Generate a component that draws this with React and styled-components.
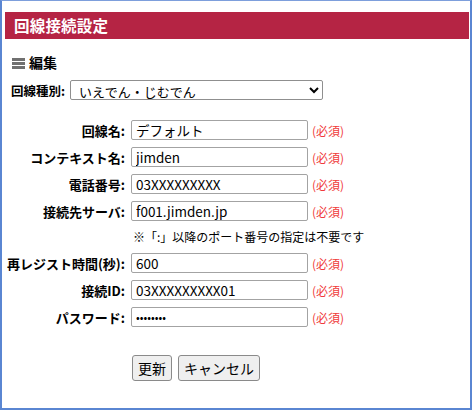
import React from "react";
import styled, { createGlobalStyle } from "styled-components";

const Global = createGlobalStyle`
  html, body { margin: 0; padding: 0; background: #fff; }
  body { font-family: "Noto Sans CJK JP", "Noto Sans", sans-serif; color: #000; }
  * { box-sizing: border-box; }
`;

const Frame = styled.div`
  width: 472px;
  height: 410px;
  border: 2px solid #5a86d2;
  border-top: 1px solid #7d9fdc;
  padding: 11px 1px 0 3px;
  background: #fff;
`;

const Header = styled.div`
  height: 27px;
  background: #b52444;
  color: #fff;
  font-weight: bold;
  font-size: 15.5px;
  line-height: 27px;
  padding-left: 9px;
  letter-spacing: 0.2px;
`;

const Heading = styled.div`
  margin: 15px 0 0 7px;
  display: flex;
  align-items: center;
  gap: 4px;
  font-weight: bold;
  font-size: 14px;
  height: 16px;
  line-height: 16px;
`;

const Bars = styled.span`
  display: inline-flex;
  flex-direction: column;
  gap: 1px;
  width: 13px;
  margin-top: 2px;
  & > i { display: block; height: 3px; background: #707070; }
`;

const TypeRow = styled.div`
  margin: 10px 0 0 6px;
  display: flex;
  align-items: center;
  gap: 5px;
  height: 20px;
`;

const Label = styled.label`
  font-size: ${(p) => p.$size || 13}px;
  font-weight: bold;
  white-space: nowrap;
  justify-self: end;
`;

const Select = styled.select`
  width: 253px;
  height: 20px;
  font-family: inherit;
  font-size: 13px;
  padding: 0 0 0 4px;
  border: 1px solid #8f8f8f;
  border-radius: 2px;
  background: #fff;
  color: #000;
`;

const Form = styled.div`
  margin-top: 20px;
  display: grid;
  grid-template-columns: 120px 177px auto;
  column-gap: 6px;
  row-gap: 7px;
  align-items: center;
`;

const Input = styled.input`
  width: 177px;
  height: 20px;
  font-family: inherit;
  font-size: 13.5px;
  padding: 0 4px;
  border: 1px solid #a3a3a3;
  border-radius: 2px;
  color: #000;
  background: #fff;
  outline: none;
  &[type="password"] { font-size: 11px; letter-spacing: 0; }
`;

const Required = styled.span`
  font-size: 12px;
  color: #f03a3a;
  margin-left: -2px;
`;

const Note = styled.div`
  grid-column: 2 / 4;
  font-size: 12px;
  height: 18px;
  line-height: 18px;
  padding-left: 2px;
  white-space: nowrap;
  color: #000;
`;

const Buttons = styled.div`
  margin: 28px 0 0 127px;
  display: flex;
  gap: 6px;
`;

const Button = styled.button`
  height: 26px;
  padding: 0 ${(p) => p.$pad || 5}px;
  font-family: inherit;
  font-size: 14px;
  background: #efefef;
  border: 1px solid #8a8a8a;
  border-radius: 3px;
  color: #000;
`;

const rows = [
  { label: "回線名:", value: "デフォルト" },
  { label: "コンテキスト名:", value: "jimden" },
  { label: "電話番号:", value: "03XXXXXXXXX" },
  { label: "接続先サーバ:", value: "f001.jimden.jp", note: "※「:」以降のポート番号の指定は不要です" },
  { label: "再レジスト時間(秒):", value: "600" },
  { label: "接続ID:", value: "03XXXXXXXXX01" },
  { label: "パスワード:", value: "password", type: "password" },
];

export default function App() {
  return (
    <>
      <Global />
      <Frame>
        <Header>回線接続設定</Header>
        <Heading>
          <Bars><i /><i /><i /></Bars>
          編集
        </Heading>
        <TypeRow>
          <Label $size={12.5}>回線種別:</Label>
          <Select defaultValue="a">
            <option value="a">いえでん・じむでん</option>
          </Select>
        </TypeRow>
        <Form>
          {rows.map((r) => (
            <React.Fragment key={r.label}>
              <Label>{r.label}</Label>
              <Input type={r.type || "text"} defaultValue={r.value} />
              <Required>(必須)</Required>
              {r.note && (
                <>
                  <span />
                  <Note>{r.note}</Note>
                </>
              )}
            </React.Fragment>
          ))}
        </Form>
        <Buttons>
          <Button $pad={5}>更新</Button>
          <Button $pad={5}>キャンセル</Button>
        </Buttons>
      </Frame>
    </>
  );
}
